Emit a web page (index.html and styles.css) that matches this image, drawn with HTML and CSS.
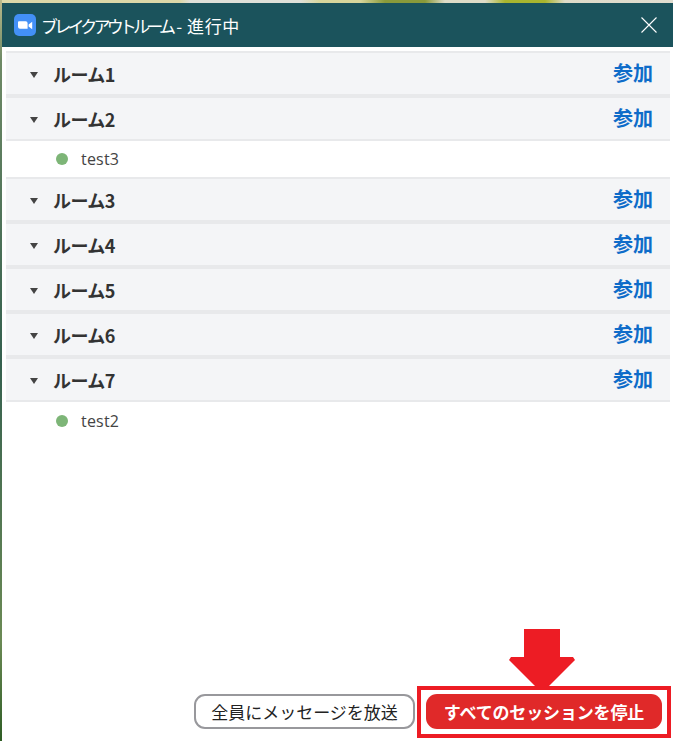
FILE: index.html
```html
<!DOCTYPE html>
<html lang="ja">
<head>
<meta charset="utf-8">
<title>ブレイクアウトルーム</title>
<link rel="stylesheet" href="styles.css">
</head>
<body>
<div class="window">
  <header class="titlebar">
    <svg class="logo" viewBox="0 0 22 22" width="22" height="22"><rect width="22" height="22" rx="5" fill="#4390f6"/><path d="M4 8.2a1 1 0 0 1 1-1h6.600a2 2 0 0 1 2 2v5.600H6a2 2 0 0 1-2-2zM14.600 10.600l3.600-2.800v7.400l-3.600-2.800z" fill="#fff"/></svg>
    <span class="title"><span class="kana">ブレイクアウトルーム</span>- 進行中</span>
    <svg class="close" viewBox="0 0 16 16" width="16" height="16"><path d="M.5.5l15 15M15.500.5l-15 15" stroke="#fff" stroke-width="1.1" fill="none"/></svg>
  </header>
  <main class="rooms">
    <section class="room first"><span class="caret"></span><span class="name">ルーム1</span><a class="join">参加</a></section>
    <section class="room open"><span class="caret"></span><span class="name">ルーム2</span><a class="join">参加</a></section>
    <div class="member bordered"><span class="dot"></span><span>test3</span></div>
    <section class="room"><span class="caret"></span><span class="name">ルーム3</span><a class="join">参加</a></section>
    <section class="room"><span class="caret"></span><span class="name">ルーム4</span><a class="join">参加</a></section>
    <section class="room"><span class="caret"></span><span class="name">ルーム5</span><a class="join">参加</a></section>
    <section class="room"><span class="caret"></span><span class="name">ルーム6</span><a class="join">参加</a></section>
    <section class="room open"><span class="caret"></span><span class="name">ルーム7</span><a class="join">参加</a></section>
    <div class="member"><span class="dot"></span><span>test2</span></div>
  </main>
  <footer class="actions">
    <button class="btn outline">全員にメッセージを放送</button>
    <button class="btn danger">すべてのセッションを停止</button>
  </footer>
</div>
<div class="callout-box"></div>
<svg class="callout-arrow" viewBox="0 0 66 57" width="66" height="57"><path d="M15 0h36v28h13l2 3-26 26H26L0 31l2-3h13z" fill="#ed1c24"/></svg>
</body>
</html>
```
FILE: styles.css
```css
* { box-sizing: border-box; }
html, body { margin: 0; height: 100%; }
body {
  position: relative;
  overflow: hidden;
  width: 673px;
  height: 741px;
  padding-top: 3px;
  padding-left: 2px;
  background:
    linear-gradient(180deg, #b9b98a 0, #6f8a66 60px, #35604f 360px, #6b8a55 640px, #2f5d25 741px) left top / 2px 100% no-repeat,
    linear-gradient(90deg, #dcd8a8 0, #dcd8a8 180px, #dfe0d8 190px, #dfe0d8 300px, #d8d69c 320px, #d8d69c 360px, #8a9a3a 385px, #8a9a3a 425px, #dedcc8 445px, #dedcc8 485px, #a9b52e 505px, #a9b52e 545px, #dedbc8 565px, #e0ddd0 100%);
  font-family: "Noto Sans CJK JP", "Noto Sans", sans-serif;
}
.window {
  display: flex;
  flex-direction: column;
  height: 738px;
  background: #fff;
}
.titlebar {
  display: flex;
  align-items: center;
  flex: none;
  height: 44px;
  padding: 0 16px 0 12px;
  background: #1b535c;
  color: #fff;
}
.logo { flex: none; margin-right: 5px; }
.title { flex: 1; font-size: 17px; line-height: 1; white-space: nowrap; letter-spacing: .6px; }
.kana { letter-spacing: -3.800px; margin-right: 4px; }
.close { flex: none; }
.rooms { flex: 1; padding: 4px 3px 0 4px; }
.room {
  display: flex;
  align-items: center;
  height: 45px;
  padding: 0 18px 0 24px;
  background: #f4f5f7;
  border-bottom: 4px solid #e8e9eb;
}
.room.first { height: 47px; border-top: 2px solid #e8e9eb; }
.room.open { height: 43px; border-bottom-width: 2px; }
.caret {
  flex: none;
  width: 0;
  height: 0;
  margin: 2px 15px 0 0;
  border-top: 6px solid #444;
  border-left: 4.500px solid transparent;
  border-right: 4.500px solid transparent;
}
.name { flex: 1; font-size: 18px; font-weight: 700; color: #333; letter-spacing: -.6px; line-height: 1; }
.join { font-size: 20px; font-weight: 600; color: #0e6cc9; line-height: 1; margin: 0 -1px 1px 0; }
.member {
  display: flex;
  align-items: center;
  height: 38px;
  padding: 0 0 0 50px;
  font-family: "Open Sans", "Noto Sans", sans-serif;
  font-size: 16px;
  letter-spacing: .2px;
  color: #444;
}
.member.bordered { border-bottom: 2px solid #e8e9eb; }
.dot {
  flex: none;
  width: 12px;
  height: 12px;
  margin-right: 13px;
  border-radius: 50%;
  background: #7db577;
}
.actions {
  display: flex;
  flex: none;
  justify-content: flex-end;
  gap: 11px;
  padding: 0 11px 12px 0;
}
.btn {
  height: 35px;
  padding: 0;
  border-radius: 11px;
  font-family: inherit;
  font-size: 17px;
  line-height: 1;
  white-space: nowrap;
}
.outline { width: 221px; background: #fff; border: 2px solid #98989c; color: #222; }
.danger { width: 236px; background: #e02929; border: none; color: #fff; font-weight: 700; letter-spacing: -.15px; }
.callout-box {
  position: absolute;
  left: 417px;
  top: 686px;
  width: 254px;
  height: 52px;
  border: 4px solid #ed1c24;
}
.callout-arrow { position: absolute; left: 509px; top: 629px; }
```
